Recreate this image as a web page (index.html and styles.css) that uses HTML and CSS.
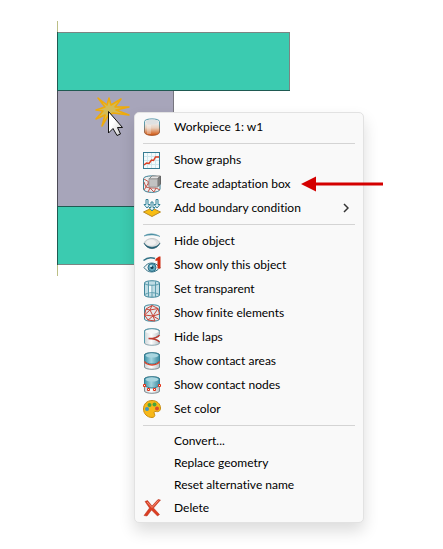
FILE: index.html
```html
<!DOCTYPE html>
<html lang="en">
<head>
    <meta charset="UTF-8">
    <meta name="viewport" content="width=device-width, initial-scale=1.0">
    <title>Workpiece menu</title>
    <link rel="stylesheet" href="styles.css">
</head>
<body>

<main class="viewport">

  <svg class="model" width="300" height="280" viewBox="0 0 300 280" aria-hidden="true">
    <defs>
      <linearGradient id="cursor_fill" x1="0" y1="0" x2="1" y2="1">
        <stop offset="0.4" stop-color="#fff"/>
        <stop offset="1" stop-color="#c8c8c8"/>
      </linearGradient>
    </defs>
    <!-- axis -->
    <path d="M57.5 21V276" stroke="#bcbf86"/>
    <!-- workpiece between the dies -->
    <rect x="57.5" y="90.5" width="116" height="116" fill="#a7a5ba" stroke="#77767f"/>
    <rect x="57.5" y="32.5" width="232" height="58" fill="#3bcbb0" stroke="#7b8583"/>
    <rect x="57.5" y="206.5" width="232" height="58" fill="#3bcbb0" stroke="#7b8583"/>
    <path d="M57.5 32V265M57 90.5H290M57 206.5H174" stroke="#1f5a52"/>
    <path d="M57.5 91V206" stroke="#4b4a55"/>
    <!-- click mark -->
    <path d="M98 98L107 105L109 98L111 105L121 99L115 107L129 107L116 110L129 115L113 113L108 116L102 126L105 115L96 119L103 111L96 110L105 107Z" fill="#d3bb58" stroke="#eeaa0c" stroke-width="1.500" stroke-linejoin="round"/>
    <path d="M108.500 111.500V133L113 128.500L117 135.500L120.500 134L117.500 127.500H122.500Z" fill="url(#cursor_fill)" stroke="#111"/>
  </svg>

  <div class="context_menu" role="menu" aria-label="Workpiece 1: w1">
    <button type="button" class="menu_item" role="menuitem">
      <svg class="icon" viewBox="0 0 18 18" aria-hidden="true">
        <defs>
          <linearGradient id="hot" x1="0" y1="0" x2="0" y2="1">
            <stop offset="0.25" stop-color="#ececec"/>
            <stop offset="0.55" stop-color="#e8cfbd"/>
            <stop offset="0.95" stop-color="#d4601c"/>
          </linearGradient>
          <linearGradient id="rim" x1="0" y1="0" x2="0" y2="1">
            <stop offset="0.3" stop-color="#5c9cae"/>
            <stop offset="0.9" stop-color="#a85a30"/>
          </linearGradient>
          <linearGradient id="steel" x1="0" y1="0" x2="1" y2="0">
            <stop offset="0" stop-color="#cdd3d6"/>
            <stop offset="0.45" stop-color="#fff"/>
            <stop offset="1" stop-color="#b9c2c6"/>
          </linearGradient>
          <linearGradient id="water" x1="0" y1="0" x2="1" y2="0">
            <stop offset="0" stop-color="#3f93a8"/>
            <stop offset="0.45" stop-color="#a2d3de"/>
            <stop offset="1" stop-color="#3c8ba0"/>
          </linearGradient>
        </defs>
        <path d="M1.500 3.500C1.500 0 16.500 0 16.500 3.500V14C16.500 18.500 1.500 18.500 1.500 14Z" fill="url(#hot)" stroke="url(#rim)"/>
        <ellipse cx="9" cy="4" rx="6.500" ry="2.500" fill="#dfe1e2"/>
        <path d="M6 7V16" stroke="#fff" stroke-width="4" opacity="0.3"/>
      </svg>
      <span class="label">Workpiece 1: w1</span>
    </button>

    <hr class="menu_line">

    <button type="button" class="menu_item" role="menuitem">
      <svg class="icon" viewBox="0 0 18 18" aria-hidden="true">
        <rect x="0.500" y="1.500" width="16" height="16" fill="#f3fafc" stroke="#367c93"/>
        <path d="M4.500 2V17M8.500 2V17M12.500 2V17M1 5.500H16M1 9.500H16M1 13.500H16" stroke="#cfe6ec"/>
        <path d="M1 14L3.500 12L6 12.500L8.500 9L10.500 9.500L12.500 6H16" fill="none" stroke="#dc3d20" stroke-width="1.500"/>
      </svg>
      <span class="label">Show graphs</span>
    </button>
    <button type="button" class="menu_item" role="menuitem">
      <svg class="icon" viewBox="0 0 18 18" aria-hidden="true">
        <path d="M0.500 3.500C1 0 16.500 0 17 3.500V14C17 18.500 0.500 18.500 0.500 14Z" fill="#eceeee" stroke="#3d7f93"/>
        <path d="M1 4L6 7L3 12L1 7M3 12L1 15M3 12L7 13L5 17M7 13L11 17L13 13H7M13 13L17 15M5 7L7 13" fill="none" stroke="#c4544a"/>
        <path d="M6 4L9 1H17.500L14.500 4Z" fill="#e6e6e6" stroke="#858585"/>
        <path d="M14.500 4L17.500 1V9L14.500 12Z" fill="#7d7d7d" stroke="#666"/>
        <rect x="6" y="4" width="8.500" height="8" fill="#c2c2c2" stroke="#9a9a9a"/>
      </svg>
      <span class="label">Create adaptation box</span>
    </button>
    <button type="button" class="menu_item" role="menuitem" aria-haspopup="true">
      <svg class="icon" viewBox="0 0 18 18" aria-hidden="true">
        <path d="M0.500 13L9 9L17.500 13L9 17.500Z" fill="#f8bd13" stroke="#b98a25"/>
        <path d="M3 0.500V5.500H1L4 9L7 5.500H5V0.500ZM13 0.500V5.500H11L14 9L17 5.500H15V0.500Z" fill="#e5f5f9" stroke="#358297"/>
        <path d="M8 3V8.500H6L9 12L12 8.500H10V3Z" fill="#e5f5f9" stroke="#358297"/>
      </svg>
      <span class="label">Add boundary condition</span>
      <svg class="chevron" viewBox="0 0 6 10" aria-hidden="true">
        <path d="M1 1L5 5L1 9" fill="none" stroke="#333" stroke-width="1.500"/>
      </svg>
    </button>

    <hr class="menu_line">

    <button type="button" class="menu_item" role="menuitem">
      <svg class="icon" viewBox="0 0 18 18" aria-hidden="true">
        <path d="M1 4C5 1 12 1 17 4.500C12 2.500 6 2.500 1 4Z" fill="#4d91a5" stroke="#4d91a5" stroke-width="0.500"/>
        <path d="M1 11C4 5 14 5 17 11C14 18 4 18 1 11Z" fill="#dcdedf" stroke="#c3c9cc"/>
        <ellipse cx="8" cy="10.500" rx="5" ry="3" fill="#f0f0f0"/>
        <path d="M1 11C4 18.500 14 18.500 17 11C14 16.500 4 16.500 1 11Z" fill="#245e72" stroke="#245e72" stroke-width="0.500"/>
      </svg>
      <span class="label">Hide object</span>
    </button>
    <button type="button" class="menu_item" role="menuitem">
      <svg class="icon" viewBox="0 0 18 18" aria-hidden="true">
        <path d="M0.500 4.500C4 1.500 8 1 12 2.500" fill="none" stroke="#347387" stroke-width="1.500"/>
        <path d="M1 11.500C5 5.500 12 5.500 17 11.500C12 17.500 5 17.500 1 11.500Z" fill="#f1f4f5" stroke="#347387"/>
        <circle cx="9" cy="11.500" r="4" fill="#65abc0" stroke="#2a6c84"/>
        <circle cx="9" cy="11.500" r="1.500" fill="#123f54"/>
        <circle cx="8" cy="10" r="1" fill="#e9f8fc"/>
        <path d="M12.500 3L16 0.500H17.500V12.500H14.500V4.500L12.500 5Z" fill="#cf2d13"/>
      </svg>
      <span class="label">Show only this object</span>
    </button>
    <button type="button" class="menu_item" role="menuitem">
      <svg class="icon" viewBox="0 0 18 18" aria-hidden="true">
        <path d="M1.500 3C1.500 0 16.500 0 16.500 3V15C16.500 18 1.500 18 1.500 15Z" fill="#c0dde5" stroke="#40869a"/>
        <path d="M6 5H10V14H6Z" fill="#f2fafc"/>
        <path d="M1.500 3C1.500 6 16.500 6 16.500 3M1.500 15C4 12 14 12 16.500 15M5.500 1.500V17M9 5V17M12.500 1.500V17" fill="none" stroke="#5a9bac"/>
      </svg>
      <span class="label">Set transparent</span>
    </button>
    <button type="button" class="menu_item" role="menuitem">
      <svg class="icon" viewBox="0 0 18 18" aria-hidden="true">
        <path d="M1.500 3C1.500 0 16.500 0 16.500 3V15C16.500 18 1.500 18 1.500 15Z" fill="#e3e8ea" stroke="#40869a"/>
        <path d="M9 1.500L3 5L1.500 11L5 16L10 12L16 15.500M9 1.500L7 6L3 5M7 6L1.500 11L10 12L7 6L15 4.500L9 1.500M15 4.500L10 12L16.500 10L15 4.500M5 16L12 17L10 12" fill="none" stroke="#c8463a"/>
      </svg>
      <span class="label">Show finite elements</span>
    </button>
    <button type="button" class="menu_item" role="menuitem">
      <svg class="icon" viewBox="0 0 18 18" aria-hidden="true">
        <path d="M1.500 3C1.500 0 16.500 0 16.500 3V6.500L11 10.500L16.500 13.500V15C16.500 18 1.500 18 1.500 15Z" fill="url(#steel)" stroke="#8ca5ae"/>
        <path d="M1.500 15V3C1.500 0 16.500 0 16.500 3" fill="none" stroke="#559bad"/>
        <ellipse cx="9" cy="3.500" rx="6.500" ry="2" fill="#f7f8f8"/>
        <path d="M16.500 7C15 10 11 10.500 5.500 10.500C11 10.500 14 11.500 16.500 14" fill="none" stroke="#bd3b30" stroke-width="1.500"/>
      </svg>
      <span class="label">Hide laps</span>
    </button>
    <button type="button" class="menu_item" role="menuitem">
      <svg class="icon" viewBox="0 0 18 18" aria-hidden="true">
        <path d="M1.500 3C1.500 0 16.500 0 16.500 3V15C16.500 18 1.500 18 1.500 15Z" fill="url(#steel)" stroke="#7e8c92"/>
        <path d="M1.500 3C1.500 0 16.500 0 16.500 3V9C14 13 4 13 1.500 9Z" fill="url(#water)" stroke="#357d92"/>
        <ellipse cx="9" cy="3.500" rx="6.500" ry="2" fill="#a9d5df"/>
        <path d="M1.500 9.500C4 14 14 14 16.500 9.500" fill="none" stroke="#d8452d" stroke-width="1.500"/>
      </svg>
      <span class="label">Show contact areas</span>
    </button>
    <button type="button" class="menu_item" role="menuitem">
      <svg class="icon" viewBox="0 0 18 18" aria-hidden="true">
        <path d="M1.500 3C1.500 0 16.500 0 16.500 3V15C16.500 18 1.500 18 1.500 15Z" fill="url(#steel)" stroke="#7e8c92"/>
        <path d="M1.500 3C1.500 0 16.500 0 16.500 3V9C14 13 4 13 1.500 9Z" fill="url(#water)" stroke="#357d92"/>
        <ellipse cx="9" cy="3.500" rx="6.500" ry="2" fill="#a9d5df"/>
        <path d="M0.500 8.500H2.500V10.500H0.500ZM4.500 12.500H6.500V14.500H4.500ZM10.500 12.500H12.500V14.500H10.500ZM15.500 8.500H17.500V10.500H15.500Z" fill="#fff" stroke="#e02e12"/>
      </svg>
      <span class="label">Show contact nodes</span>
    </button>
    <button type="button" class="menu_item" role="menuitem">
      <svg class="icon" viewBox="0 0 18 18" aria-hidden="true">
        <path d="M9 0.500C14 0.500 17.500 4 17.500 8C17.500 11.500 15 12 13 11.500C11 11 10.500 12.500 11.500 14C12.500 16 11 17.500 9 17.500C4 17.500 0.500 13.500 0.500 9C0.500 4 4 0.500 9 0.500Z" fill="#f8b818" stroke="#c98e13"/>
        <circle cx="6.500" cy="5" r="2" fill="#48a43e"/>
        <circle cx="11.500" cy="4.500" r="2" fill="#48a43e"/>
        <circle cx="4" cy="9" r="2" fill="#4199bd"/>
        <circle cx="14" cy="8.500" r="2" fill="#d94d2e"/>
      </svg>
      <span class="label">Set color</span>
    </button>

    <hr class="menu_line">

    <button type="button" class="menu_item text_only" role="menuitem"><span class="label">Convert...</span></button>
    <button type="button" class="menu_item text_only" role="menuitem"><span class="label">Replace geometry</span></button>
    <button type="button" class="menu_item text_only" role="menuitem"><span class="label">Reset alternative name</span></button>
    <button type="button" class="menu_item" role="menuitem">
      <svg class="icon" viewBox="0 0 18 18" aria-hidden="true">
        <path d="M2 2.500L4.500 1.500L9 7L15 0.500L17.500 1L10.500 9L16.500 15.500L14.500 17L8.500 11L4 17L1 16.500L6.500 9Z" fill="#dc3e22" stroke="#b52e18" stroke-width="0.500"/>
        <path d="M4 3L9 8.500L15.500 1.500" fill="none" stroke="#f49078"/>
      </svg>
      <span class="label">Delete</span>
    </button>
  </div>

  <!-- pointer to the menu entry -->
  <svg class="pointer" width="82" height="16" viewBox="0 0 82 16" aria-hidden="true">
    <path d="M0 8L15 0.500V6.500H82V9.500H15V15.500Z" fill="#d40000"/>
  </svg>

</main>

</body>
</html>
```
FILE: styles.css
```css
* {
  box-sizing: border-box;
}

body {
  margin: 0;
  background-color: #fff;
  font-family: Lato, "Open Sans", sans-serif;
  font-size: 12px;
  font-variant-ligatures: none;
  color: #000;
}

/* model, menu and pointer share one cell and lie over each other */
.viewport {
  display: grid;
  justify-items: start;
  align-items: start;
}

.viewport > * {
  grid-area: 1 / 1;
}

.model {
  display: block;
}

.context_menu {
  display: flex;
  flex-direction: column;
  min-width: 230px;
  margin: 112px 0 26px 134px;
  padding: 2px 8px;
  background-color: #f9f9f9;
  border: 1px solid #e2e2e2;
  border-radius: 5px;
  box-shadow: 0 8px 16px rgba(0, 0, 0, 0.14);
}

.menu_item {
  display: flex;
  align-items: center;
  gap: 13px;
  height: 24px;
  padding: 0;
  border: 0;
  background: none;
  font-family: inherit;
  font-size: inherit;
  font-variant-ligatures: inherit;
  line-height: 16px;
  color: inherit;
  text-align: left;
  white-space: nowrap;
}

.menu_item:hover {
  background-color: #efefef;
}

.text_only {
  height: 22px;
  padding-left: 31px;
}

.icon {
  flex: none;
  width: 18px;
  height: 18px;
}

.chevron {
  width: 6px;
  height: 10px;
  margin-left: auto;
  margin-right: 6px;
}

.menu_line {
  width: 100%;
  height: 1px;
  margin: 4px 0;
  border: 0;
  background-color: #d4d4d4;
}

.pointer {
  margin: 176px 0 0 301px;
}
```
